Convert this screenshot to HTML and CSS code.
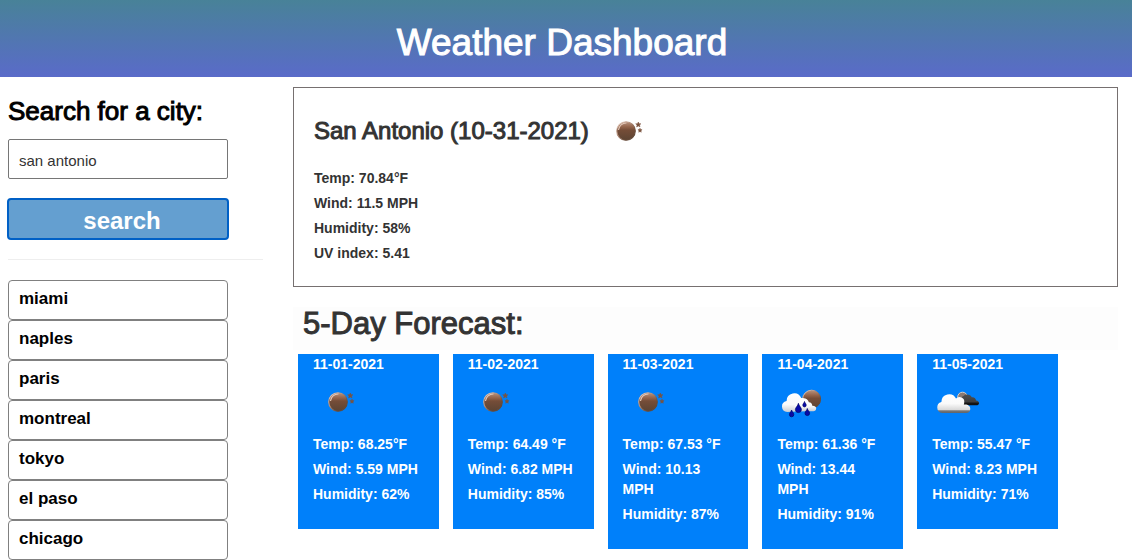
FILE: index.html
```html
<!DOCTYPE html>
<html lang="en">
<head>
<meta charset="utf-8">
<title>Weather Dashboard</title>
<link rel="stylesheet" href="styles.css">
</head>
<body>
<svg class="defs" aria-hidden="true">
  <defs>
    <linearGradient id="moon-fill" x1="0" y1="0" x2="0" y2="1">
      <stop offset="0" stop-color="#b8937f"/><stop offset=".28" stop-color="#94644b"/><stop offset=".45" stop-color="#754d38"/><stop offset="1" stop-color="#5c4433"/>
    </linearGradient>
    <linearGradient id="moon-rim" x1="0" y1="0" x2="1" y2="1">
      <stop offset="0" stop-color="#f0dcd0"/><stop offset=".4" stop-color="#b08a76"/><stop offset=".7" stop-color="#6b4d3b"/><stop offset="1" stop-color="#5a4536"/>
    </linearGradient>
    <linearGradient id="cloud-fill" x1="0" y1="0" x2="0" y2="1">
      <stop offset="0" stop-color="#ffffff"/><stop offset=".5" stop-color="#fafafa"/><stop offset=".83" stop-color="#d8d8d8"/><stop offset=".88" stop-color="#777777"/><stop offset="1" stop-color="#606468"/>
    </linearGradient>
    <linearGradient id="rain-fill" x1="0" y1="0" x2="0" y2="1">
      <stop offset="0" stop-color="#ffffff"/><stop offset=".6" stop-color="#fafafa"/><stop offset="1" stop-color="#c9ccd2"/>
    </linearGradient>
    <linearGradient id="dark-fill" x1="0" y1="0" x2="0" y2="1">
      <stop offset="0" stop-color="#505050"/><stop offset=".7" stop-color="#3e3e3e"/><stop offset=".78" stop-color="#151515"/><stop offset="1" stop-color="#101010"/>
    </linearGradient>
    <symbol id="clear" viewBox="0 0 50 50">
      <circle cx="25" cy="25" r="9.3" fill="url(#moon-fill)" stroke="url(#moon-rim)" stroke-width="1.1"/>
      <path d="M17.5 24a7.7 7.7 0 0 1 8-7" fill="none" stroke="#e3c8b9" stroke-width="1.1"/>
      <path d="M37.3 16l.8 1.7 1.8.1-1.4 1.2.5 1.9-1.7-1-1.7 1 .5-1.9-1.4-1.2 1.800-.1zM39 22.200l.6 1.400 1.500.1-1.200 1 .4 1.500-1.300-.8-1.300.8.4-1.500-1.200-1 1.500-.1z" fill="#7a533f" stroke="#7a533f" stroke-width=".5"/>
    </symbol>
    <symbol id="rain" viewBox="0 0 50 50">
      <circle cx="34.6" cy="22.2" r="9" fill="url(#moon-fill)" stroke="url(#moon-rim)" stroke-width="1"/>
      <path d="M10.2 35a5.6 5.6 0 0 1-.6-11.1A7.6 7.6 0 0 1 24.2 21c3-.2 5.3 2 5.3 5V34z" fill="url(#rain-fill)"/>
      <path d="M19 34.2a3.7 3.7 0 0 1 1.3-7 6 6 0 0 1 11.6-2c2.2.2 3.3 1.6 3.4 3.500 3 0 4 1.500 3.900 2.900a2.900 2.900 0 0 1-2.900 2.600z" fill="url(#rain-fill)"/>
      <g fill="#080ba8" stroke="#020365" stroke-width=".7">
        <path d="M21.4 26.3c.4 2.6 3 4 3 6.3a3 3 0 0 1-6 0c0-2.300 2.600-3.700 3-6.300z"/>
        <path d="M14.600 33c.3 1.800 2.200 2.800 2.200 4.600a2.200 2.200 0 0 1-4.400 0c0-1.800 1.900-2.800 2.200-4.600z"/>
        <path d="M27.500 24.500c.3 1.400 1.700 2.200 1.700 3.700a1.700 1.700 0 0 1-3.400 0c0-1.500 1.400-2.300 1.700-3.700z"/>
        <path d="M30.300 31.500c.3 1.900 2.300 3 2.300 4.800a2.300 2.300 0 0 1-4.600 0c0-1.800 2-2.900 2.300-4.800z"/>
      </g>
    </symbol>
    <symbol id="clouds" viewBox="0 0 50 50">
      <circle cx="30.500" cy="20" r="4.800" fill="#8b7a72" stroke="#d8d0ca" stroke-width="1"/>
      <path d="M28 28.300c-1-5 .5-8.300 3.500-9.300 3-2.600 7.200-1.300 8.200 1.300 2.500-.4 4.200 1 4.300 3.200 2 .3 3.200 1.400 3 2.700-.2 1.300-1.200 2.100-2.500 2.100z" fill="url(#dark-fill)"/>
      <path d="M10 36a5.700 5.700 0 0 1-.6-11.100A7.700 7.700 0 0 1 24 21.500a4.800 4.800 0 0 1 8.200 4.200c0 .8-.2 1.400-.4 2 3.500-.6 6.500 1 6.500 4.200 0 2.500-1.800 4.100-4 4.100z" fill="url(#cloud-fill)"/>
    </symbol>
  </defs>
</svg>

<header class="page-header">
  <h1 class="page-title">Weather Dashboard</h1>
</header>

<div class="layout">
  <aside class="sidebar">
    <form class="search-form">
      <label class="search-label" for="city">Search for a city:</label>
      <input class="search-input" id="city" type="text" value="san antonio">
      <button class="search-button" type="button">search</button>
    </form>
    <hr class="divider">
    <ul class="history">
      <li><button class="history-item" type="button">miami</button></li>
      <li><button class="history-item" type="button">naples</button></li>
      <li><button class="history-item" type="button">paris</button></li>
      <li><button class="history-item" type="button">montreal</button></li>
      <li><button class="history-item" type="button">tokyo</button></li>
      <li><button class="history-item" type="button">el paso</button></li>
      <li><button class="history-item" type="button">chicago</button></li>
    </ul>
  </aside>

  <main class="main">
    <section class="current">
      <div class="current-heading">
        <h2 class="current-title">San Antonio (10-31-2021)</h2>
        <svg class="icon" role="img" aria-label="Clear"><use href="#clear"/></svg>
      </div>
      <div class="stats">
        <p>Temp: 70.84°F</p>
        <p>Wind: 11.5 MPH</p>
        <p>Humidity: 58%</p>
        <p>UV index: 5.41</p>
      </div>
    </section>

    <section class="forecast">
      <h2 class="forecast-title">5-Day Forecast:</h2>
      <div class="cards">
        <article class="card">
          <h3 class="card-date">11-01-2021</h3>
          <svg class="icon" role="img" aria-label="Clear"><use href="#clear"/></svg>
          <div class="stats"><p>Temp: 68.25°F</p><p>Wind: 5.59 MPH</p><p>Humidity: 62%</p></div>
        </article>
        <article class="card">
          <h3 class="card-date">11-02-2021</h3>
          <svg class="icon" role="img" aria-label="Clear"><use href="#clear"/></svg>
          <div class="stats"><p>Temp: 64.49 °F</p><p>Wind: 6.82 MPH</p><p>Humidity: 85%</p></div>
        </article>
        <article class="card">
          <h3 class="card-date">11-03-2021</h3>
          <svg class="icon" role="img" aria-label="Clear"><use href="#clear"/></svg>
          <div class="stats"><p>Temp: 67.53 °F</p><p>Wind: 10.13 MPH</p><p>Humidity: 87%</p></div>
        </article>
        <article class="card">
          <h3 class="card-date">11-04-2021</h3>
          <svg class="icon" role="img" aria-label="Rain"><use href="#rain"/></svg>
          <div class="stats"><p>Temp: 61.36 °F</p><p>Wind: 13.44 MPH</p><p>Humidity: 91%</p></div>
        </article>
        <article class="card">
          <h3 class="card-date">11-05-2021</h3>
          <svg class="icon" role="img" aria-label="Clouds"><use href="#clouds"/></svg>
          <div class="stats"><p>Temp: 55.47 °F</p><p>Wind: 8.23 MPH</p><p>Humidity: 71%</p></div>
        </article>
      </div>
    </section>
  </main>
</div>
</body>
</html>
```

FILE: styles.css
```css
* {
  box-sizing: border-box;
}

body {
  margin: 0;
  background: #fff;
  color: #333;
  font-family: "Helvetica Neue", Helvetica, "Liberation Sans", Arial, sans-serif;
  font-size: 14px;
  line-height: 20px;
}

h1, h2, h3, p, ul {
  margin: 0;
  padding: 0;
}

button, input {
  font-family: inherit;
}

.defs {
  position: absolute;
  width: 0;
  height: 0;
}

.page-header {
  padding: 23px 8px 14px 0;
  background: linear-gradient(#488298, #5a6bc9);
  text-align: center;
}

.page-title {
  color: #fff;
  font-size: 37px;
  font-weight: 400;
  line-height: 40px;
  -webkit-text-stroke: 1px;
}

.layout {
  display: grid;
  grid-template-columns: 1fr 3fr;
}

.sidebar {
  padding: 19px 20px 0 8px;
}

.search-form {
  display: flex;
  flex-direction: column;
  align-items: flex-start;
}

.search-label {
  margin-bottom: 13px;
  color: #000;
  font-size: 26px;
  line-height: 30px;
  -webkit-text-stroke: 1px;
}

.search-input {
  width: 220px;
  height: 40px;
  padding: 2px 10px 0;
  border: 1px solid #767676;
  border-radius: 2px;
  background: #fff;
  color: #333;
  font-size: 15px;
}

.search-button {
  width: 220px;
  height: 40px;
  margin-top: 20px;
  padding: 3px 0 0 8px;
  border: 0;
  border-radius: 3px;
  outline: 2px solid #0060c6;
  outline-offset: -1px;
  background: #649fd0;
  color: #fff;
  font-size: 24px;
  font-weight: 700;
  line-height: 30px;
}

.divider {
  margin: 20px 0;
  border: 0;
  border-top: 1px solid #eee;
}

.history {
  list-style: none;
}

.history-item {
  display: block;
  width: 220px;
  height: 40px;
  padding: 0 10px 3px;
  border: 1px solid #808080;
  border-radius: 4px;
  background: #fff;
  color: #000;
  font-size: 17px;
  font-weight: 700;
  line-height: 20px;
  text-align: left;
}

.main {
  padding: 10px 14px 0 10px;
}

.current {
  padding: 18px 20px 23px;
  border: 1px solid #767070;
}

.current-heading {
  display: flex;
  align-items: center;
  gap: 12px;
  margin-bottom: 12px;
}

.current-title {
  font-size: 24px;
  font-weight: 400;
  line-height: 30px;
  -webkit-text-stroke: 1px;
}

.icon {
  display: block;
  width: 50px;
  height: 50px;
}

.stats {
  display: grid;
  gap: 5px;
  font-weight: 700;
}

.forecast {
  margin-top: 20px;
}

.forecast-title {
  padding: 0 10px 10px;
  background: #fdfdfd;
  font-size: 31px;
  font-weight: 400;
  line-height: 33px;
  -webkit-text-stroke: 1px;
}

.cards {
  display: grid;
  grid-template-columns: repeat(5, 1fr);
  align-items: start;
  gap: 14px;
  margin: 4px 60px 0 5px;
}

.card {
  padding: 0 15px 25px;
  background: #0080fa;
  color: #fff;
}

.card .icon {
  margin: 3px 0 7px;
}

.card-date {
  font-size: 14px;
  font-weight: 700;
  line-height: 20px;
}
```
